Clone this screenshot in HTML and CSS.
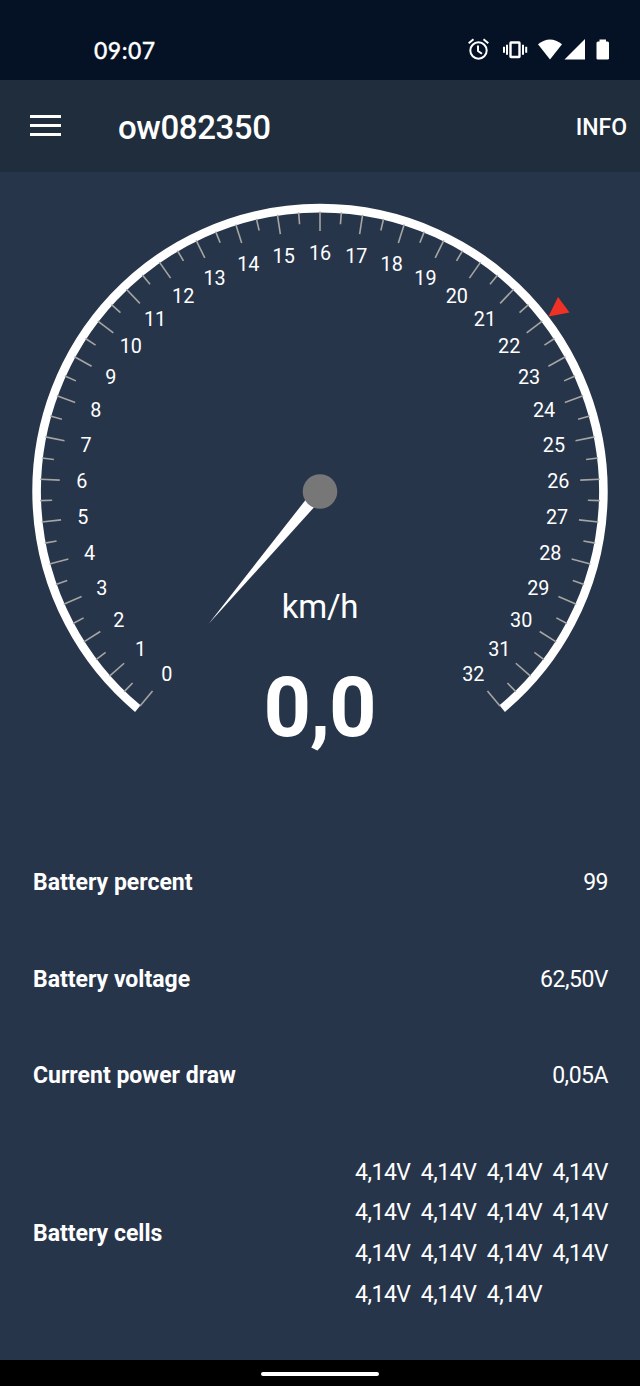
FILE: index.html
```html
<!DOCTYPE html>
<html lang="en">
  <head>
    <meta charset="utf-8">
    <title>ow082350</title>
    <link rel="stylesheet" href="styles.css">
  </head>
  <body>
    <div class="status-bar">
      <span class="clock">09:07</span>
      <svg class="status-icons" width="146" height="30" viewBox="0 0 146 30">
        <g fill="none" stroke="#fff" stroke-width="2">
          <circle cx="12.5" cy="15.5" r="8.2" />
          <path d="M12 10.5v5.5l4 2.8M2.7 8.3L7.5 4.3M17.5 4.3l4.8 4" />
          <rect x="44.5" y="7.5" width="9" height="14.5" rx="0.5" stroke-width="2.4" />
          <path d="M41 9.8v10M57 9.8v10M38 11.8v6M60.2 11.8v6" />
        </g>
        <path fill="#fff" d="M72 9.3Q84 -0.5 96 9.3L84 24.5z" />
        <path fill="#fff" d="M98.5 24.5L119 4v20.5z" />
        <path fill="#fff" d="M130.5 8q0-1.5 1.5-1.5h1.5V4.5h6.500v2h1.5q1.5 0 1.5 1.5v15.5q0 1-1.5 1h-9.5q-1.5 0-1.5-1z" />
      </svg>
    </div>

    <div class="toolbar">
      <div class="menu-button">
        <div class="menu-line"></div>
        <div class="menu-line"></div>
        <div class="menu-line"></div>
      </div>
      <div class="title">ow082350</div>
      <div class="info-button">INFO</div>
    </div>

    <div class="content">
      <svg class="gauge" width="640" height="640" viewBox="0 0 640 640">
        <path class="gauge-arc" d="M137.8 536.6A283.4 283.4 0 1 1 502.2 536.6" />
        <g id="ticks"></g>
        <g id="labels"></g>
        <path class="max-marker" d="M548.5 144.5L558 125L569.5 140.5z" />
        <path class="needle" d="M208.5 452L315.3 315.5L324.7 323.5z" />
        <circle class="hub" cx="320" cy="319.5" r="17.3" />
        <text class="unit" x="320" y="446">km/h</text>
        <text class="speed" x="319.5" y="564">0,0</text>
      </svg>

      <div class="row">
        <div class="name">Battery percent</div>
        <div class="value">99</div>
      </div>
      <div class="row">
        <div class="name">Battery voltage</div>
        <div class="value">62,50V</div>
      </div>
      <div class="row">
        <div class="name">Current power draw</div>
        <div class="value">0,05A</div>
      </div>
      <div class="row cells-row">
        <div class="name">Battery cells</div>
        <div class="cells">
          <span>4,14V</span><span>4,14V</span><span>4,14V</span><span>4,14V</span>
          <span>4,14V</span><span>4,14V</span><span>4,14V</span><span>4,14V</span>
          <span>4,14V</span><span>4,14V</span><span>4,14V</span><span>4,14V</span>
          <span>4,14V</span><span>4,14V</span><span>4,14V</span>
        </div>
      </div>
    </div>

    <div class="nav-bar">
      <div class="nav-handle"></div>
    </div>

    <script>
      const ns = 'http://www.w3.org/2000/svg';
      const ticks = document.getElementById('ticks');
      const labels = document.getElementById('labels');
      const centerX = 320;
      const centerY = 319.5;
      const maxSpeed = 32;

      function point(speed, radius) {
        const angle = ((-140 + (280 * speed) / maxSpeed) * Math.PI) / 180;
        return [centerX + radius * Math.sin(angle), centerY - radius * Math.cos(angle)];
      }

      // one tick every half km/h, a long one with a label every full km/h
      for (let i = 0; i <= maxSpeed * 2; i++) {
        const speed = i / 2;
        const isMajor = i % 2 === 0;
        const [x1, y1] = point(speed, 280);
        const [x2, y2] = point(speed, isMajor ? 260.5 : 268);

        const line = document.createElementNS(ns, 'line');
        line.setAttribute('x1', x1);
        line.setAttribute('y1', y1);
        line.setAttribute('x2', x2);
        line.setAttribute('y2', y2);
        ticks.appendChild(line);

        if (isMajor) {
          const [x, y] = point(speed, 238.5);
          const text = document.createElementNS(ns, 'text');
          text.setAttribute('x', x);
          text.setAttribute('y', y + 7);
          text.textContent = speed;
          labels.appendChild(text);
        }
      }
    </script>
  </body>
</html>
```

FILE: styles.css
```css
body {
  margin: 0;
  height: 1386px;
  display: flex;
  flex-direction: column;
  overflow: hidden;
  background-color: #27354b;
  color: #fff;
  font-family: Roboto, sans-serif;
}

.status-bar {
  height: 80px;
  box-sizing: border-box;
  padding: 20px 28px 0 94px;
  display: flex;
  align-items: center;
  justify-content: space-between;
  background-color: #051225;
}

.clock {
  margin-bottom: 1px;
  font-family: Lato, sans-serif;
  font-size: 23px;
  font-weight: 500;
  letter-spacing: 0.5px;
  -webkit-text-stroke: 0.3px #fff;
}

.status-icons {
  display: block;
  margin-bottom: 1px;
}

.toolbar {
  height: 92px;
  box-sizing: border-box;
  padding: 2px 13px 0 30px;
  display: flex;
  align-items: center;
  background-color: #202d3d;
}

.menu-button {
  width: 31px;
  height: 21px;
  margin-bottom: 4px;
  display: flex;
  flex-direction: column;
  justify-content: space-between;
}

.menu-line {
  height: 3px;
  background-color: #fff;
}

.title {
  margin-left: 57px;
  flex: 1;
  font-size: 33px;
  font-weight: 500;
  letter-spacing: -0.4px;
}

.info-button {
  font-size: 23px;
  font-weight: 500;
}

.content {
  flex: 1;
}

.gauge {
  display: block;
  margin-bottom: 22.5px;
}

.gauge-arc {
  fill: none;
  stroke: #fff;
  stroke-width: 8.6;
}

#ticks line {
  stroke: #a5a5a2;
  stroke-width: 1.6;
}

#labels text {
  fill: #fff;
  font-size: 19.8px;
  text-anchor: middle;
}

.max-marker {
  fill: #f03226;
}

.needle {
  fill: #fff;
}

.hub {
  fill: #777;
}

.unit {
  fill: #fff;
  font-size: 33px;
  letter-spacing: -0.3px;
  text-anchor: middle;
}

.speed {
  fill: #fff;
  font-size: 83px;
  font-weight: 700;
  letter-spacing: -1.2px;
  text-anchor: middle;
}

.row {
  height: 96.5px;
  padding: 0 32px 0 33px;
  display: flex;
  align-items: center;
  justify-content: space-between;
  font-size: 23px;
}

.name {
  font-weight: 700;
}

.value,
.cells {
  letter-spacing: -0.5px;
}

.cells-row {
  height: 218px;
}

.cells {
  display: grid;
  grid-template-columns: repeat(4, auto);
  column-gap: 10.4px;
  padding-top: 2px;
  line-height: 40.7px;
}

.nav-bar {
  height: 26px;
  display: flex;
  align-items: center;
  justify-content: center;
  background-color: #000;
}

.nav-handle {
  width: 118px;
  height: 4px;
  margin-top: 2px;
  border-radius: 2px;
  background-color: #fff;
}
```
